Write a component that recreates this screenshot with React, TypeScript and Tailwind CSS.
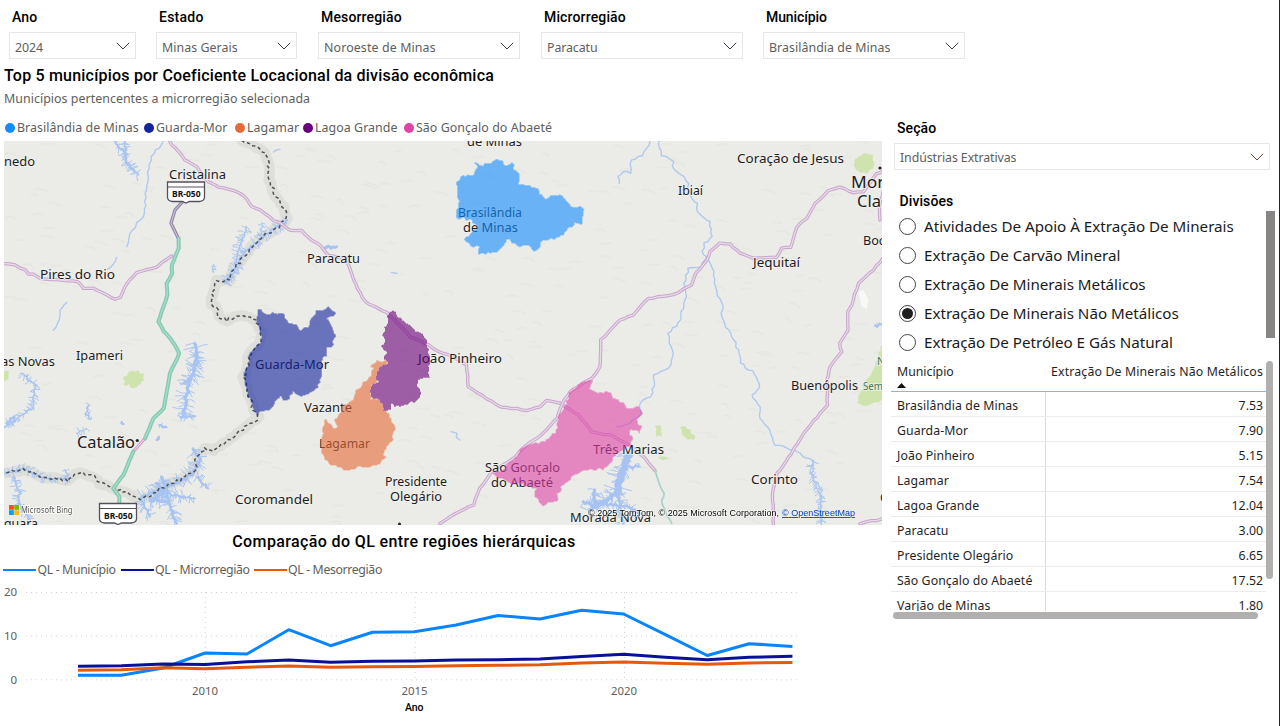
import React from "react";

const SANS = "font-['Noto_Sans',sans-serif]";
const HEAD = "font-['Roboto',sans-serif] font-medium text-black";

type Pt = [number, number];

function parse(s: string): Pt[] {
  return s.trim().split(/\s+/).map((p) => p.split(",").map(Number) as Pt);
}

function rng(seed: number) {
  let a = seed;
  return () => {
    a = (a * 1664525 + 1013904223) % 4294967296;
    return a / 4294967296;
  };
}

/* Subdivides a polyline and shifts the new points sideways, for natural outlines. */
function jag(s: string, amp: number, step: number, close = false): string {
  const pts = parse(s);
  if (close) pts.push(pts[0]);
  const r = rng(pts.length * 97 + Math.round(pts[0][0]));
  const out: string[] = [];
  for (let i = 0; i < pts.length - 1; i++) {
    const [x1, y1] = pts[i];
    const [x2, y2] = pts[i + 1];
    const len = Math.hypot(x2 - x1, y2 - y1) || 1;
    const n = Math.max(1, Math.round(len / step));
    for (let k = 0; k < n; k++) {
      const t = k / n;
      const o = (r() - 0.5) * 2 * amp;
      out.push(`${(x1 + (x2 - x1) * t - ((y2 - y1) / len) * o).toFixed(1)},${(y1 + (y2 - y1) * t + ((x2 - x1) / len) * o).toFixed(1)}`);
    }
  }
  if (!close) out.push(pts[pts.length - 1].join(","));
  return "M" + out.join("L") + (close ? "Z" : "");
}

/* Short side arms along a polyline: the inlets of a reservoir. */
function arms(s: string, size: number, step: number): string {
  const pts = parse(s);
  const r = rng(pts.length * 31 + Math.round(pts[0][1]));
  let d = "";
  for (let i = 0; i < pts.length - 1; i++) {
    const [x1, y1] = pts[i];
    const [x2, y2] = pts[i + 1];
    const n = Math.max(1, Math.round(Math.hypot(x2 - x1, y2 - y1) / step));
    for (let k = 0; k < n; k++) {
      const x = x1 + ((x2 - x1) * k) / n;
      const y = y1 + ((y2 - y1) * k) / n;
      const a = Math.atan2(y2 - y1, x2 - x1) + (r() > 0.5 ? 1 : -1) * (0.7 + r() * 1.2);
      const l = size * (0.3 + r() * 0.7);
      const mx = x + Math.cos(a) * l * 0.5 + (r() - 0.5) * 8;
      const my = y + Math.sin(a) * l * 0.5 + (r() - 0.5) * 8;
      d += `M${x.toFixed(1)},${y.toFixed(1)}L${mx.toFixed(1)},${my.toFixed(1)}L${(x + Math.cos(a) * l).toFixed(1)},${(y + Math.sin(a) * l).toFixed(1)}`;
    }
  }
  return d;
}

const BORDER =
  "725,0 760,15 795,40 805,70 808,120 825,165 850,200 862,235 835,262 790,290 750,325 730,355 700,385 690,420 650,422 640,450 635,490 655,510 655,530 680,542 710,527 750,532 766,542 778,562 786,585 780,610 760,625 745,650 742,685 730,710 740,740 743,760 755,785 760,810 776,830 770,838 735,862 690,895 640,930 615,925 590,950 585,990 540,1020 490,1040 455,1065 420,1080 395,1065 345,1045 300,1030 290,1015 240,995 215,1010 205,1022 120,1008 70,990 12,1000";

const ROADS = [
  "508,5 535,35 555,60 590,80 625,125 655,142 700,150 730,165 755,200 780,208 820,242 840,250 870,270 905,272 935,300 960,315 985,345 1030,355 1045,375 1060,420 1095,485 1160,518 1190,545 1230,590 1285,615 1315,635 1350,645 1400,675 1405,740 1460,775 1505,803 1550,806 1580,812 1620,800 1640,780 1685,792 1735,825 1775,875 1830,885 1885,915 1935,955 1965,992",
  "1320,1152 1365,1120 1420,1095 1440,1045 1475,995 1535,960 1580,915 1630,880 1670,835 1685,792 1710,755 1775,715 1800,680 1803,600 1860,540 1900,525 1945,475 2020,465 2075,435 2088,400 2120,360 2130,335 2160,308 2190,312 2220,340 2260,355 2330,352 2345,325 2372,322 2390,260 2420,235 2445,190 2485,152 2520,140 2560,158 2590,155 2630,100 2650,95",
  "2650,355 2620,390 2575,430 2555,495 2543,515 2543,570 2518,610 2525,635 2490,680 2482,720 2482,795 2410,880 2375,940 2332,1000 2318,1050 2320,1155",
  "12,370 45,375 75,390 85,402 100,402 120,415 235,425 250,445 280,445 345,478 362,472 380,430 410,398 470,380 515,348",
  "2580,1152 2600,1145 2630,1142 2650,1135",
  "2650,150 2638,200 2640,240",
];
const GREEN_ROADS = [
  "535,295 537,325 515,375 517,400 500,430 503,465 490,500 475,545 490,572 515,600 538,640 510,700 498,770 492,805 460,835 435,895",
  "400,935 370,1005 340,1045 358,1070 358,1090",
];

const RIVERS = [
  "490,5 455,50 445,85 440,150 430,230 395,270 380,320",
  "350,352 340,375 322,388",
  "200,487 180,510 175,550 160,570",
  "1860,130 1855,110 1870,95 1890,100 1895,60 1925,45 1950,5",
  "1975,0 1985,45 2020,65 2020,90 2060,120 2075,180 2092,190 2092,215 2130,245 2138,290 2115,310 2105,335 2120,350 2105,380 2065,385 2055,430 2058,470 2035,550 2005,580 2005,610 2020,640 2015,675 1960,705 1960,760 1920,790 1923,820 1890,850 1850,860",
  "2120,350 2130,375 2145,395 2140,430 2170,500 2160,520 2185,570 2215,630 2220,670 2265,700 2280,745 2255,765 2280,800 2280,835 2310,870 2325,915 2380,930 2440,965 2430,1000 2465,1050 2465,1155",
  "1355,872 1370,880 1368,893 1380,900",
  "1175,395 1190,400",
  "820,35 840,28",
];

const LAKES: { d: string; w: number; size: number }[] = [
  { d: "345,5 375,40 380,70 415,105", w: 5, size: 22 },
  { d: "375,5 378,60 395,90", w: 5, size: 16 },
  { d: "740,260 715,330 700,400 680,430", w: 4, size: 24 },
  { d: "862,240 790,290 740,330 700,390 675,430", w: 5, size: 24 },
  { d: "785,250 785,290", w: 3, size: 16 },
  { d: "640,375 640,398", w: 3, size: 8 },
  { d: "585,610 592,660 575,710 560,760 550,830", w: 9, size: 38 },
  { d: "592,640 580,700 555,730", w: 8, size: 30 },
  { d: "540,830 585,830", w: 5, size: 14 },
  { d: "580,925 600,960 580,1000 530,1030 480,1050 420,1075", w: 8, size: 34 },
  { d: "485,1010 500,1050 510,1100 530,1150", w: 8, size: 34 },
  { d: "470,1030 490,1060 450,1080 500,1085", w: 10, size: 26 },
  { d: "500,1060 540,1070 585,1075", w: 5, size: 22 },
  { d: "425,1080 450,1130", w: 6, size: 26 },
  { d: "590,1010 625,1045", w: 6, size: 20 },
  { d: "65,700 105,735 100,800 60,830 12,862", w: 4, size: 18 },
  { d: "20,850 40,830 45,845", w: 6, size: 8 },
  { d: "12,1000 70,985 125,1010 200,1020", w: 4, size: 20 },
  { d: "195,990 208,1025", w: 4, size: 20 },
  { d: "40,1010 60,1060 55,1090 90,1140", w: 5, size: 24 },
  { d: "268,795 258,820 272,838", w: 4, size: 12 },
  { d: "230,880 260,865", w: 3, size: 16 },
  { d: "478,855 500,862", w: 6, size: 10 },
  { d: "470,900 478,890", w: 6, size: 6 },
  { d: "365,845 372,852", w: 5, size: 8 },
  { d: "1885,945 1865,1000 1850,1060", w: 20, size: 44 },
  { d: "1850,1060 1810,1085 1770,1110", w: 12, size: 32 },
  { d: "1850,1050 1860,1100 1870,1150", w: 8, size: 32 },
  { d: "1780,1050 1785,1100 1750,1085", w: 9, size: 26 },
  { d: "1800,1090 1880,1100 1920,1120", w: 7, size: 26 },
  { d: "1870,980 1920,980", w: 5, size: 14 },
  { d: "975,322 1010,320", w: 8, size: 8 },
  { d: "2625,558 2650,555", w: 5, size: 10 },
  { d: "2440,960 2435,1010 2460,1060 2465,1155", w: 3, size: 20 },
];

const REGIONS: { d: string; fill: string; x: number; y: number }[] = [
  {
    x: 1320, y: 0, fill: "#118DFF",
    d: "103,67 115,68 120,76 150,68 165,60 185,63 195,76 217,67 222,85 236,98 236,128 275,140 292,145 297,163 318,177 335,168 367,165 380,185 392,200 408,202 420,200 429,210 429,238 424,256 405,250 380,272 370,285 350,295 310,302 300,318 283,334 265,318 240,320 215,310 211,293 195,305 175,333 120,343 117,322 95,318 74,298 98,277 112,262 95,240 70,235 50,232 45,208 58,200 50,155 52,125 68,108 100,103 113,85",
  },
  {
    x: 660, y: 300, fill: "#12239E",
    d: "115,212 125,208 132,222 158,218 188,219 200,245 222,250 240,270 268,260 272,240 290,215 322,202 345,217 340,232 322,235 330,255 346,285 335,320 318,322 318,350 305,358 303,420 292,448 265,460 248,470 222,455 208,475 190,480 182,465 160,490 148,508 118,515 116,530 100,510 95,485 83,460 80,440 70,410 82,385 85,350 100,325 120,310 126,285 118,262 106,242",
  },
  {
    x: 660, y: 300, fill: "#E66C37",
    d: "473,358 485,364 503,362 503,378 483,385 470,408 468,430 455,435 452,475 485,480 490,505 510,530 522,560 521,600 505,612 490,640 498,650 480,672 450,680 430,680 378,690 345,678 320,665 308,640 305,610 306,570 313,538 330,550 345,566 352,562 345,540 360,520 372,495 400,480 408,455 430,425 448,412 462,385 450,380 462,368",
  },
  {
    x: 660, y: 300, fill: "#6B007B",
    d: "505,222 520,214 535,230 555,245 575,262 600,280 618,295 622,320 630,345 628,370 630,412 600,415 595,435 605,455 595,480 560,492 540,502 510,490 515,510 492,512 490,490 470,475 452,470 455,435 475,425 470,405 480,385 505,370 490,350 500,338 485,318 495,300 490,285 498,255",
  },
  {
    x: 1320, y: 630, fill: "#E044A7",
    d: "455,92 450,115 465,128 515,125 520,140 555,165 565,175 590,167 606,180 606,195 592,208 597,222 606,236 598,248 575,240 568,255 580,265 570,285 545,305 520,325 490,360 430,360 400,378 365,410 350,440 352,455 325,458 310,468 280,440 290,415 270,408 215,400 190,392 155,368 185,360 220,330 250,290 310,275 320,268 345,248 355,210 360,185 375,168 390,125 420,100",
  },
];

/* text, left, baseline, width, size */
const LABELS: [string, number, number, number, number][] = [
  ["nedo", 4, 166, 31, 12.5],
  ["Cristalina", 169, 179, 57, 12.5],
  ["Pires do Rio", 40, 279, 75, 12.5],
  ["de Minas", 467, 146, 55, 12.5],
  ["Brasilândia", 458, 217, 64, 12.5],
  ["de Minas", 463, 232, 55, 12.5],
  ["Ibiaí", 678, 195, 25, 12.5],
  ["Coração de Jesus", 737, 163, 107, 12.5],
  ["Mon", 851, 188, 37, 17],
  ["Cla", 857, 207, 24, 17],
  ["Boca", 863, 245, 29, 12.5],
  ["Jequitaí", 753, 267, 47, 12.5],
  ["Paracatu", 307, 263, 53, 12.5],
  ["João Pinheiro", 418, 363, 84, 12.5],
  ["Vazante", 304, 412, 48, 12.5],
  ["Lagamar", 319, 448, 51, 12.5],
  ["Guarda-Mor", 255, 369, 74, 12.5],
  ["as Novas", 1, 366, 54, 12.5],
  ["Ipameri", 76, 360, 47, 12.5],
  ["Catalão", 77, 448, 58, 17],
  ["Coromandel", 235, 504, 78, 12.5],
  ["quara", 4, 528, 34, 12.5],
  ["Presidente", 385, 486, 62, 12.5],
  ["Olegário", 390, 501, 52, 12.5],
  ["São Gonçalo", 485, 472, 75, 12.5],
  ["do Abaeté", 491, 487, 62, 12.5],
  ["Três Marias", 593, 454, 71, 12.5],
  ["Buenópolis", 791, 390, 67, 12.5],
  ["Corinto", 751, 484, 47, 12.5],
  ["Morada Nova", 570, 522, 81, 12.5],
  ["C", 880, 502, 8, 12.5],
];

const RELIEF = (() => {
  const r = rng(7);
  let d = "";
  for (let i = 0; i < 420; i++) {
    const x = r() * 2640;
    const y = r() * 1150;
    d += `M${x.toFixed(0)},${y.toFixed(0)}q${(8 + r() * 12).toFixed(0)},${(-8 + r() * 8).toFixed(0)} ${(18 + r() * 20).toFixed(0)},${(r() * 16 - 4).toFixed(0)}`;
  }
  return d;
})();

function Shield({ x, y }: { x: number; y: number }) {
  return (
    <g>
      <path d={`M${x},${y}h37v15q0,4 -5,4.500h-10l-3.500,1.500l-3.500,-1.500h-10q-5,-.5 -5,-4.500z`} fill="#fff" stroke="#55505c" strokeWidth="1.300" />
      <path d={`M${x},${y + 5}h37`} stroke="#55505c" strokeWidth="1" />
      <text x={x + 4.5} y={y + 15} fontSize="9" fontWeight="700" textLength="28.500" lengthAdjust="spacingAndGlyphs" fill="#111">BR-050</text>
    </g>
  );
}

function MapView() {
  return (
    <div className="relative ml-1 h-[384px] w-[878px] overflow-hidden bg-[#ebebe7]">
      <svg width="878" height="384" viewBox="4 141 878 384" className={`block ${SANS}`}>
        <g transform="translate(0 140) scale(.33333)" fill="none" strokeLinejoin="round" strokeLinecap="round">
          <path d={RELIEF} stroke="#e3e3de" strokeWidth="5" opacity=".5" />
          <g fill="#cfe3ae">
            <path d={jag("2568,55 2600,38 2618,45 2622,80 2600,100 2575,95 2560,75", 3, 8, true)} />
            <path d={jag("2650,600 2620,690 2590,735 2570,790 2595,800 2650,780", 3, 8, true)} />
            <path d={jag("368,715 400,690 432,700 425,725 400,740 372,732", 6, 7, true)} />
            <path d={jag("12,695 24,692 26,715 12,725", 2, 7, true)} />
            <path d={jag("2040,865 2060,860 2085,890 2080,900 2060,900", 5, 7, true)} />
            <path d={jag("1965,860 1980,855 1985,888 1970,890", 4, 7, true)} />
            <path d={jag("1975,952 2000,948 2018,960 1985,960", 3, 7, true)} />
          </g>
          <path d="M2575,455 L2590,450 2605,480 2600,508 2585,498Z" fill="#f8f8f7" />
          <path d={jag(BORDER, 3, 12)} stroke="#dfdfda" strokeWidth="32" />
          {LAKES.map((l, i) => (
            <g key={i} stroke="#a6c3f1">
              <path d={jag(l.d, 4, 6)} strokeWidth={l.w} />
              <path d={arms(l.d, l.size, 5)} strokeWidth="2.800" />
            </g>
          ))}
          {RIVERS.map((d, i) => (
            <path key={i} d={jag(d, 4, 12)} stroke="#aec8ee" strokeWidth="4" />
          ))}
          <path d={jag(BORDER, 5, 9)} stroke="#505055" strokeWidth="4.500" strokeDasharray="10 8" strokeLinecap="butt" />
          {ROADS.map((d, i) => (
            <g key={i}>
              <path d={jag(d, 1.5, 16)} stroke="#c9a5cd" strokeWidth="10" />
              <path d={jag(d, 1.5, 16)} stroke="#e6dbe7" strokeWidth="4" />
            </g>
          ))}
          <path d="M548,185 L525,210 513,250 535,295" stroke="#9489ac" strokeWidth="10" />
          <path d="M548,185 L525,210 513,250 535,295" stroke="#cfc9d8" strokeWidth="3" />
          <path d="M435,895 L400,935" stroke="#cf9fc9" strokeWidth="9" />
          <path d="M435,895 L400,935" stroke="#f2e6f0" strokeWidth="3" />
          {GREEN_ROADS.map((d, i) => (
            <g key={i}>
              <path d={jag(d, 1, 16)} stroke="#84c9b2" strokeWidth="12" />
              <path d={jag(d, 1, 16)} stroke="#a9dccb" strokeWidth="4" />
            </g>
          ))}
          <path d={jag("1965,992 1980,1040 1992,1060 1985,1090 2015,1150", 2, 12)} stroke="#a9d0c8" strokeWidth="5" />
        </g>
        <Shield x={167.5} y={182} />
        <Shield x={99.5} y={503.500} />
        <g fill="#1c1c1e" stroke="#f2f2ef" strokeWidth="2" strokeOpacity=".75" paintOrder="stroke">
          {LABELS.map(([t, x, y, w, s], i) => (
            <text key={i} x={x} y={y} fontSize={s} textLength={w} lengthAdjust="spacingAndGlyphs">{t}</text>
          ))}
          <text x="863" y="389.500" fontSize="10.500" fill="#3f7a56" textLength="20" lengthAdjust="spacingAndGlyphs">Sem</text>
          <text x="877" y="365" fontSize="10.500" fill="#3f7a56">N</text>
        </g>
        <circle cx="137.300" cy="440.500" r="1.600" fill="#222" />
        <circle cx="880" cy="168" r="1.600" fill="#222" />
        <circle cx="399.500" cy="524" r="1.500" fill="#222" />
        <g transform="translate(0 140) scale(.33333)" opacity=".6" shapeRendering="crispEdges">
          {REGIONS.map((r, i) => (
            <path key={i} transform={`translate(${r.x} ${r.y})`} d={jag(r.d, 4, 8, true)} fill={r.fill} />
          ))}
        </g>
        <rect x="9" y="505" width="4.800" height="4.800" fill="#f25022" />
        <rect x="14.200" y="505" width="4.800" height="4.800" fill="#7fba00" />
        <rect x="9" y="510.200" width="4.800" height="4.800" fill="#00a4ef" />
        <rect x="14.200" y="510.200" width="4.800" height="4.800" fill="#ffb900" />
        <text x="21" y="513" fontSize="8.800" fill="#555" stroke="#fff" strokeWidth="2" strokeOpacity=".8" paintOrder="stroke" textLength="51.500" lengthAdjust="spacingAndGlyphs">Microsoft Bing</text>
        <g fontFamily="Liberation Sans, sans-serif" fontSize="9">
          <text x="588" y="516" textLength="191" fill="#000" stroke="#fff" strokeOpacity=".6" strokeWidth="1.500" paintOrder="stroke">© 2025 TomTom, © 2025 Microsoft Corporation,</text>
          <text x="782" y="516" textLength="73" fill="#0645c8" textDecoration="underline">© OpenStreetMap</text>
        </g>
      </svg>
    </div>
  );
}

function Chevron({ color = "#3b3a4a" }: { color?: string }) {
  return (
    <svg width="14" height="8" viewBox="0 0 14 8" fill="none" className="shrink-0">
      <path d="M.8.8 7 7 13.200.8" stroke={color} strokeWidth="1" />
    </svg>
  );
}

const FILTERS = [
  { label: "Ano", value: "2024", box: "ml-[9px] w-[127px]", lt: "tracking-[0.1px]", vt: "tracking-[-0.1px]" },
  { label: "Estado", value: "Minas Gerais", box: "ml-5 w-[141px]", lt: "tracking-[0.25px]", vt: "tracking-[0.05px]" },
  { label: "Mesorregião", value: "Noroeste de Minas", box: "ml-[21px] w-[202px]", lt: "tracking-[0.15px]", vt: "tracking-[0.12px]" },
  { label: "Microrregião", value: "Paracatu", box: "ml-[21px] w-[202px]", lt: "tracking-[0.15px]", vt: "tracking-[-0.1px]" },
  { label: "Município", value: "Brasilândia de Minas", box: "ml-5 w-[202px]", lt: "tracking-[-0.1px]", vt: "tracking-[0.04px]" },
];

const CITIES = [
  ["Brasilândia de Minas", "bg-[#118DFF]", "w-[139px]"],
  ["Guarda-Mor", "bg-[#12239E]", "w-[91px]"],
  ["Lagamar", "bg-[#E66C37]", "w-[68px]"],
  ["Lagoa Grande", "bg-[#6B007B]", "w-[101px]"],
  ["São Gonçalo do Abaeté", "bg-[#E044A7]", "w-[160px]"],
];

const SERIES = [
  { color: "#0784FF", y: [675.3, 675.3, 668, 653, 654, 629.7, 645.7, 632.2, 631.7, 625, 615.5, 619, 610.3, 614, 634.7, 655.5, 643.7, 646.3] },
  { color: "#0a1199", y: [666.3, 665.7, 664, 664.5, 661.8, 660, 662.3, 661.2, 661, 659.9, 659.8, 659, 656.5, 654.3, 657.3, 659.8, 657.3, 656.3] },
  { color: "#E65A10", y: [670.3, 669.7, 667.8, 668.7, 667.2, 666, 667.2, 666.7, 666.5, 665.8, 665.3, 664.7, 663, 662, 663.2, 664.2, 663, 662.5] },
];

const QL = [
  ["QL - Município", "bg-[#0784FF]", "w-[117.500px]"],
  ["QL - Microrregião", "bg-[#0a1199]", "w-[133px]"],
  ["QL - Mesorregião", "bg-[#E65A10]", "w-[130px]"],
];

function Chart() {
  return (
    <section className="ml-1 w-[800px]">
      <h2 className={`flex h-[33px] items-center justify-center text-[16px] tracking-[0.38px] ${HEAD}`}>Comparação do QL entre regiões hierárquicas</h2>
      <div className={`-ml-px flex h-6 items-center text-[12.300px] text-[#605e5c] ${SANS}`}>
        {QL.map(([t, c, w]) => (
          <div key={t} className={`flex shrink-0 items-center whitespace-nowrap tracking-[-0.36px] ${w}`}>
            <span className={`mr-[1.500px] h-0.5 w-[33px] shrink-0 ${c}`} />
            {t}
          </div>
        ))}
      </div>
      <svg width="800" height="144" viewBox="4 582 800 144" className={`block ${SANS}`}>
        <g stroke="#d0d0d0" strokeWidth="1" strokeDasharray="1 4">
          <path d="M26,592.500H798M26,636H798M26,679.800H798" />
          <path d="M205.300,592V680M415,592V680M624.500,592V680" />
        </g>
        {SERIES.map((s) => (
          <path key={s.color} fill="none" stroke={s.color} strokeWidth="3" strokeLinejoin="round" strokeLinecap="square" d={"M" + s.y.map((y, i) => `${79.5 + i * 41.85},${y}`).join("L")} />
        ))}
        <g fontSize="11.500" fill="#605e5c">
          <text x="4" y="596" textLength="13">20</text>
          <text x="4" y="640" textLength="13">10</text>
          <text x="10.500" y="684">0</text>
          <text x="192" y="695" textLength="26" lengthAdjust="spacingAndGlyphs">2010</text>
          <text x="401.500" y="695" textLength="26" lengthAdjust="spacingAndGlyphs">2015</text>
          <text x="611" y="695" textLength="26" lengthAdjust="spacingAndGlyphs">2020</text>
        </g>
        <text x="405" y="711" fontSize="10.500" fontFamily="Roboto, sans-serif" fontWeight="500" textLength="18.500">Ano</text>
      </svg>
    </section>
  );
}

const DIVISIONS = [
  "Atividades De Apoio À Extração De Minerais",
  "Extração De Carvão Mineral",
  "Extração De Minerais Metálicos",
  "Extração De Minerais Não Metálicos",
  "Extração De Petróleo E Gás Natural",
];

const ROWS = [
  ["Brasilândia de Minas", "7.53"],
  ["Guarda-Mor", "7.90"],
  ["João Pinheiro", "5.15"],
  ["Lagamar", "7.54"],
  ["Lagoa Grande", "12.04"],
  ["Paracatu", "3.00"],
  ["Presidente Olegário", "6.65"],
  ["São Gonçalo do Abaeté", "17.52"],
  ["Varjão de Minas", "1.80"],
];

function SidePanel() {
  return (
    <aside className={`ml-2 w-[390px] pt-[54px] ${SANS}`}>
      <h3 className={`ml-[7px] h-[23px] text-[14px] leading-[22px] tracking-[0.1px] ${HEAD}`}>Seção</h3>
      <div className="ml-1 mt-[3px] flex h-[27px] w-[376px] items-center justify-between border border-[#e6e6e6] pl-[5px] pr-[5px] text-[12.400px] text-[#605e5c]">
        <span className="pt-[4px] tracking-[-0.1px]">Indústrias Extrativas</span>
        <Chevron color="#6b4a3c" />
      </div>
      <h3 className={`ml-[9.500px] mt-[20px] h-[22px] text-[14px] leading-[22px] tracking-[0.1px] ${HEAD}`}>Divisões</h3>
      <div className="flex h-[146px] justify-between">
        <ul className="ml-[9px]">
          {DIVISIONS.map((d, i) => (
            <li key={d} className="flex h-[29px] items-center whitespace-nowrap text-[15.200px] tracking-[-0.02px] text-[#1a1a1a]">
              <span className="mr-2 flex size-[17px] items-center justify-center rounded-full border border-[#444]">
                {i === 3 && <span className="size-[11px] rounded-full bg-[#1f1f1f]" />}
              </span>
              {d}
            </li>
          ))}
        </ul>
        <span className="mr-1 -mt-px h-[127px] w-[9px] bg-[#878684]" />
      </div>
      <div className="mt-0.5 flex h-[252px] text-[12.300px] text-[#1f1f1f]">
        <div className="ml-[1px] h-[251px] w-[375px] overflow-hidden">
          <div className="flex h-[31.500px] justify-between border-b border-[#7db9ee] pl-1.5 pr-[3px]">
            <div className="leading-[24px]">
              Município
              <svg width="9" height="5" viewBox="0 0 9 5" className="-mt-px block">
                <path d="M0 5 4.500 0 9 5z" fill="#111" />
              </svg>
            </div>
            <div className="whitespace-nowrap leading-[24px] tracking-[0.15px]">Extração De Minerais Não Metálicos</div>
          </div>
          {ROWS.map(([n, v]) => (
            <div key={n} className="flex h-[25px] border-b border-[#ececec] leading-[27px]">
              <div className="w-[155px] whitespace-nowrap border-r border-[#c7def5] pl-1.5 tracking-[0.08px]">{n}</div>
              <div className="grow pr-[3px] text-right">{v}</div>
            </div>
          ))}
        </div>
        <span className="mt-px h-[218px] w-[7px] rounded-full bg-[#b1b0ae]" />
      </div>
      <span className="relative ml-[3px] block h-[7px] w-[365px] rounded-full bg-[#b1b0ae]" />
    </aside>
  );
}

export default function App() {
  return (
    <div className="flex h-[726px] w-[1280px] flex-col overflow-hidden border-r border-[#222] bg-white">
      <div className="flex h-[63px] shrink-0">
        {FILTERS.map((f) => (
          <div key={f.label} className={`shrink-0 ${f.box}`}>
            <div className={`ml-[3px] h-8 text-[14px] leading-[35px] ${HEAD} ${f.lt}`}>{f.label}</div>
            <div className={`flex h-[27px] items-center justify-between border border-[#e6e6e6] px-[5px] text-[12.400px] text-[#605e5c] ${SANS}`}>
              <span className={`whitespace-nowrap pt-[5px] ${f.vt}`}>{f.value}</span>
              <Chevron />
            </div>
          </div>
        ))}
      </div>
      <div className="flex grow">
        <main className="w-[882px] shrink-0">
          <h1 className={`ml-1 h-[25px] whitespace-nowrap text-[16px] leading-[25px] tracking-[0.2px] ${HEAD}`}>Top 5 municípios por Coeficiente Locacional da divisão econômica</h1>
          <p className={`ml-1 h-[23px] text-[12.400px] leading-[21px] tracking-[0.04px] text-[#605e5c] ${SANS}`}>Municípios pertencentes a microrregião selecionada</p>
          <div className={`ml-[5px] flex h-[30px] items-center pt-[4px] text-[12.400px] text-[#605e5c] ${SANS}`}>
            {CITIES.map(([t, c, w]) => (
              <span key={t} className={`flex shrink-0 items-center gap-[2px] whitespace-nowrap tracking-[0.06px] ${w}`}>
                <i className={`size-[10px] shrink-0 rounded-full ${c}`} />
                {t}
              </span>
            ))}
          </div>
          <MapView />
          <Chart />
        </main>
        <SidePanel />
      </div>
    </div>
  );
}
